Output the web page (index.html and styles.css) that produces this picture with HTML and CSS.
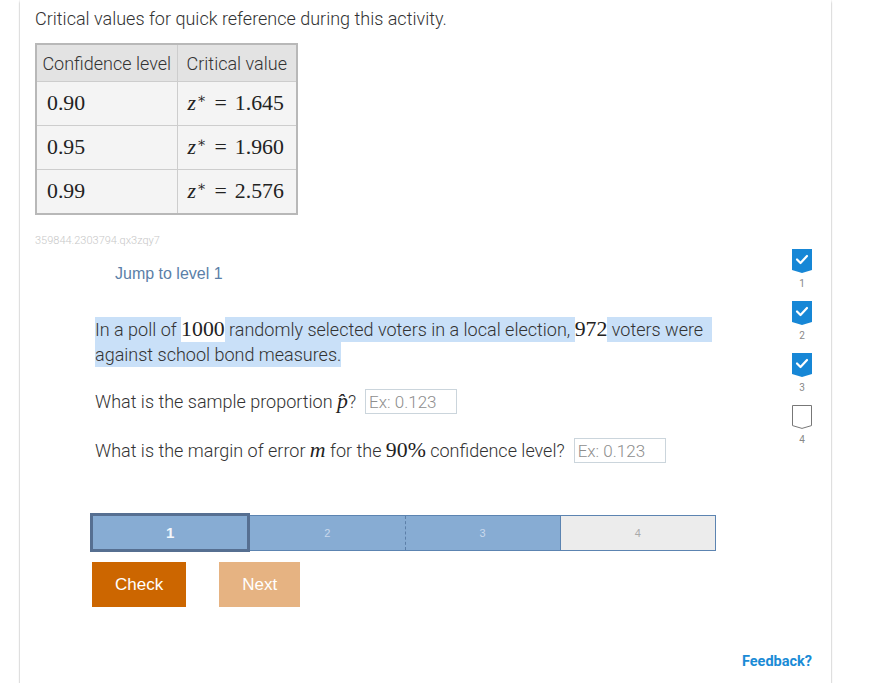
FILE: index.html
```html
<!DOCTYPE html>
<html lang="en">
<head>
<meta charset="utf-8">
<title>Activity</title>
<link rel="stylesheet" href="styles.css">
</head>
<body>
<div class="card">
  <div class="card-body">
    <div class="main">
      <p class="intro">Critical values for quick reference during this activity.</p>
      <table class="crit">
        <colgroup><col class="c1"><col class="c2"></colgroup>
        <thead>
          <tr><th>Confidence level</th><th>Critical value</th></tr>
        </thead>
        <tbody>
          <tr><td><span class="math">0.90</span></td><td><span class="math"><i>z</i><sup>∗</sup><span class="rel">=</span>1.645</span></td></tr>
          <tr><td><span class="math">0.95</span></td><td><span class="math"><i>z</i><sup>∗</sup><span class="rel">=</span>1.960</span></td></tr>
          <tr><td><span class="math">0.99</span></td><td><span class="math"><i>z</i><sup>∗</sup><span class="rel">=</span>2.576</span></td></tr>
        </tbody>
      </table>
      <div class="id">359844.2303794.qx3zqy7</div>
      <div class="jump">Jump to level 1</div>
      <div class="question">
        <p class="prompt"><span class="sel">In a poll of </span><span class="math">1000</span><span class="sel"> randomly selected voters in a local election, </span><span class="math">972</span><span class="sel"> voters were&nbsp;&nbsp;</span><br><span class="sel">against school bond measures.</span></p>
        <div class="q q1">
          <span>What is the sample proportion <span class="math"><i>p̂</i></span>?</span>
          <input class="answer" type="text" placeholder="Ex: 0.123">
        </div>
        <div class="q q2">
          <span>What is the margin of error <span class="math"><i class="m">m</i></span> for the <span class="math">90%</span> confidence level?</span>
          <input class="answer" type="text" placeholder="Ex: 0.123">
        </div>
      </div>
      <div class="levels">
        <div class="lvl lvl-cur">1</div>
        <div class="lvl lvl-done">2</div>
        <div class="lvl lvl-done">3</div>
        <div class="lvl lvl-todo">4</div>
      </div>
      <div class="actions">
        <button class="btn btn-check">Check</button>
        <button class="btn btn-next">Next</button>
      </div>
    </div>
    <div class="aside">
      <div class="step">
        <svg width="20" height="24" viewBox="0 0 20 24"><polygon points="0,0 20,0 20,21 10,24 0,21" fill="#1787d6"/><path d="M5 10.5 L8.5 14 L15 7" fill="none" stroke="#fff" stroke-width="2.2" stroke-linecap="round" stroke-linejoin="round"/></svg>
        <span class="num">1</span>
      </div>
      <div class="step">
        <svg width="20" height="24" viewBox="0 0 20 24"><polygon points="0,0 20,0 20,21 10,24 0,21" fill="#1787d6"/><path d="M5 10.5 L8.5 14 L15 7" fill="none" stroke="#fff" stroke-width="2.2" stroke-linecap="round" stroke-linejoin="round"/></svg>
        <span class="num">2</span>
      </div>
      <div class="step">
        <svg width="20" height="24" viewBox="0 0 20 24"><polygon points="0,0 20,0 20,21 10,24 0,21" fill="#1787d6"/><path d="M5 10.5 L8.5 14 L15 7" fill="none" stroke="#fff" stroke-width="2.2" stroke-linecap="round" stroke-linejoin="round"/></svg>
        <span class="num">3</span>
      </div>
      <div class="step">
        <svg width="20" height="24" viewBox="0 0 20 24"><polygon points="0.5,0.5 19.5,0.5 19.5,20.6 10,23.4 0.5,20.6" fill="#fff" stroke="#777" stroke-width="1"/></svg>
        <span class="num">4</span>
      </div>
    </div>
  </div>
  <div class="footer"><a class="feedback">Feedback?</a></div>
</div>
</body>
</html>
```
FILE: styles.css
```css
html, body {
  margin: 0;
  padding: 0;
  background: #fff;
}
body {
  font-family: "Roboto Light", Roboto, "Noto Sans", sans-serif;
  font-weight: 300;
  color: #333;
}
.card {
  margin-left: 20px;
  width: 811px;
  height: 683px;
  box-sizing: border-box;
  background: #fff;
  box-shadow: 0 2px 2px rgba(0,0,0,0.3), 0 0 1px rgba(0,0,0,0.2);
  display: flex;
  flex-direction: column;
}
.card-body {
  display: flex;
  flex: 1;
  padding-left: 15px;
  padding-right: 19px;
}
.main {
  flex: 1;
}
.aside {
  width: 20px;
  padding-top: 249px;
  display: flex;
  flex-direction: column;
}
.step {
  display: flex;
  flex-direction: column;
  align-items: center;
  height: 52px;
}
.step svg { display: block; }
.step .num {
  margin-top: 4px;
  font-family: Roboto, sans-serif;
  font-size: 10px;
  line-height: 14px;
  color: #888;
  font-weight: 400;
}
.intro {
  margin: 0;
  padding-top: 8px;
  font-size: 18px;
  line-height: 22px;
}
.math {
  font-family: "Liberation Serif", "DejaVu Serif", serif;
  font-weight: 400;
  font-size: 21.8px;
  color: #222;
}
.math sup {
  font-size: 14px;
  vertical-align: 7px;
  line-height: 0;
  margin-left: 1px;
}
.math .rel {
  margin: 0 8px;
}
.crit {
  margin-top: 13px;
  border-collapse: collapse;
  border: 2px solid #b8b8b8;
  table-layout: fixed;
}
.crit .c1 { width: 141px; }
.crit .c2 { width: 120px; }
.crit th {
  background: #e3e3e3;
  font-weight: 300;
  font-size: 18px;
  height: 36px;
  padding: 0 4px;
  text-align: center;
  border: 1px solid #cdcdcd;
  white-space: nowrap;
}
.crit td {
  background: #f4f4f4;
  height: 43px;
  padding: 0 10px;
  border: 1px solid #cdcdcd;
  white-space: nowrap;
}
.id {
  margin-top: 19px;
  font-size: 11px;
  line-height: 14px;
  color: #c8c8c8;
}
.jump {
  margin-top: 16px;
  margin-left: 80px;
  font-family: "Liberation Sans", Arial, sans-serif;
  font-weight: 400;
  font-size: 16px;
  line-height: 20px;
  color: #5b7fa8;
}
.question {
  margin-left: 60px;
}
.prompt {
  margin: 33px 0 0;
  font-size: 18px;
  line-height: 25px;
}
.sel {
  background: #c9e0f8;
  padding: 2px 0 2px;
}
.q {
  display: flex;
  align-items: center;
  font-size: 18px;
  height: 25px;
}
.q1 { margin-top: 22px; }
.q2 { margin-top: 24px; }
.q i { font-style: italic; }
.q .m { font-weight: 400; }
.answer {
  margin-left: 9px;
  width: 92px;
  height: 25px;
  box-sizing: border-box;
  border: 1px solid #cbd5dc;
  padding: 0 3px;
  font-family: "Roboto Light", Roboto, sans-serif;
  font-weight: 300;
  font-size: 17px;
  color: #333;
  background: #fff;
}
.answer::placeholder {
  color: #8e8e8e;
}
.levels {
  margin-top: 52px;
  margin-left: 55px;
  width: 626px;
  height: 36px;
  box-sizing: border-box;
  border: 1px solid #5c84b1;
  display: flex;
}
.lvl {
  flex: 1;
  display: flex;
  align-items: center;
  justify-content: center;
  font-family: "Liberation Sans", Arial, sans-serif;
  font-size: 11px;
  font-weight: 400;
}
.lvl-done {
  background: #87acd3;
  color: #c9d9ec;
  border-left: 1px dashed #5c7fa8;
}
.lvl-cur {
  background: #87acd3;
  color: #f4f7fb;
  font-size: 15px;
  font-weight: 700;
  margin: -3px 0 -2px -1px;
  border: 3px solid #566f91;
  position: relative;
  z-index: 1;
}
.lvl-cur + .lvl-done { border-left: none; }
.lvl-todo {
  background: #ececec;
  color: #aaa;
  border-left: 1px solid #5c84b1;
}
.actions {
  margin-top: 11px;
  margin-left: 57px;
  display: flex;
  gap: 33px;
}
.btn {
  border: none;
  height: 45px;
  padding: 0 23px;
  font-family: "Liberation Sans", Arial, sans-serif;
  font-size: 17px;
  color: #fff;
}
.btn-check { background: #cc6600; }
.btn-next { background: #e6b382; }
.footer {
  text-align: right;
  padding: 0 19px 12px 0;
}
.feedback {
  font-family: Roboto, sans-serif;
  font-weight: 700;
  font-size: 14.5px;
  line-height: 18px;
  color: #1a8bd6;
}
```
